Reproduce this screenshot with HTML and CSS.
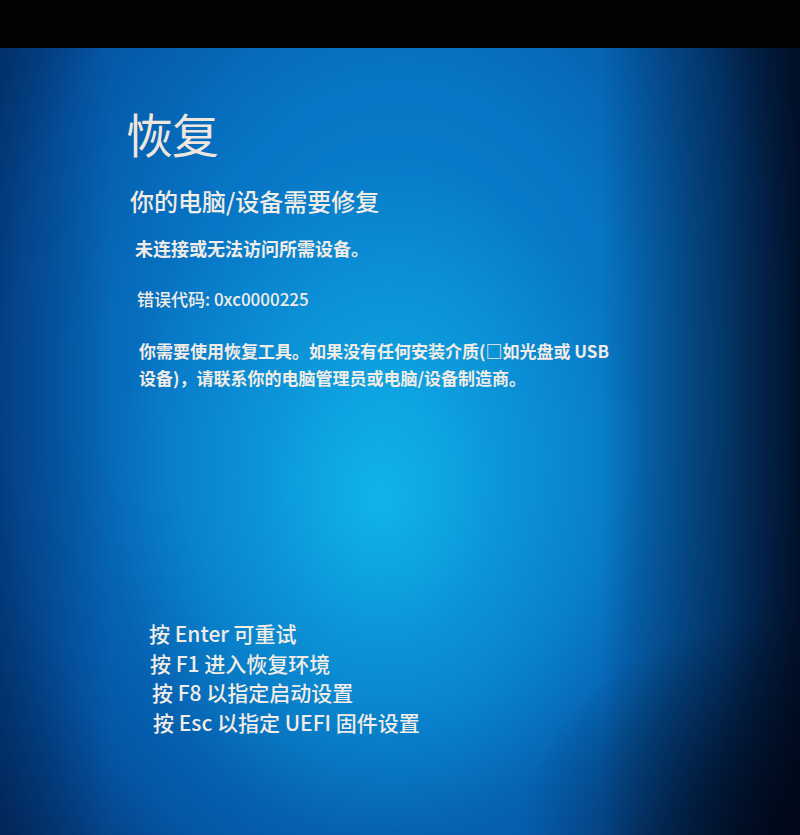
FILE: index.html
```html
<!DOCTYPE html>
<html lang="zh-CN">
<head>
<meta charset="utf-8">
<link rel="stylesheet" href="styles.css">
</head>
<body>
<div class="bezel"></div>
<main class="screen">
  <section class="message">
    <h1 class="title">恢复</h1>
    <h2 class="subtitle">你的电脑/设备需要修复</h2>
    <p class="lead">未连接或无法访问所需设备。</p>
    <p class="code">错误代码: 0xc0000225</p>
    <p class="body-text">你需要使用恢复工具。如果没有任何安装介质(□如光盘或 USB<br>设备)，请联系你的电脑管理员或电脑/设备制造商。</p>
  </section>
  <ul class="keys">
    <li class="k1">按 Enter 可重试</li>
    <li class="k2">按 F1 进入恢复环境</li>
    <li class="k3">按 F8 以指定启动设置</li>
    <li class="k4">按 Esc 以指定 UEFI 固件设置</li>
  </ul>
</main>
</body>
</html>
```

FILE: styles.css
```css
html, body {
  margin: 0;
  padding: 0;
  width: 800px;
  height: 835px;
  overflow: hidden;
  background: #000;
}
body {
  font-family: "Noto Sans CJK SC", "Noto Sans", sans-serif;
  color: #f2ece6;
}
.bezel {
  height: 48px;
  background: #020304;
}
.screen {
  height: 787px;
  box-sizing: border-box;
  display: flex;
  flex-direction: column;
  position: relative;
  background:
    radial-gradient(ellipse 270px 340px at 380px 450px, rgba(18, 192, 242, 0.8), rgba(18, 192, 242, 0.35) 45%, rgba(18, 192, 242, 0) 100%),
    radial-gradient(ellipse 520px 700px at 400px 340px, #0a8ad4 0%, #0774c4 45%, #0556a6 75%, #033470 95%, #021c40 110%);
}
.screen::after {
  content: "";
  position: absolute;
  inset: 0;
  background:
    linear-gradient(to left, rgba(0, 6, 22, 0.85) 0px, rgba(0, 6, 22, 0.45) 80px, rgba(0, 6, 22, 0) 200px),
    linear-gradient(to right, rgba(0, 25, 70, 0.35) 0px, rgba(0, 25, 70, 0) 110px),
    radial-gradient(ellipse 280px 220px at 800px 787px, rgba(0, 5, 18, 0.8), rgba(0, 5, 18, 0) 100%);
  pointer-events: none;
}
.message {
  padding: 53px 0 0 126px;
  position: relative;
  z-index: 1;
}
.title {
  margin: 0;
  font-size: 47px;
  font-weight: 400;
  line-height: 64px;
  letter-spacing: -1px;
  color: #efe6de;
}
.subtitle {
  margin: 20px 0 0 4px;
  font-size: 24px;
  font-weight: 500;
  line-height: 32px;
}
.lead {
  margin: 18px 0 0 9px;
  font-size: 18px;
  font-weight: 700;
  line-height: 26px;
}
.code {
  margin: 26px 0 0 11px;
  font-size: 17px;
  font-weight: 500;
  line-height: 24px;
}
.body-text {
  margin: 26px 0 0 13px;
  font-size: 17px;
  font-weight: 700;
  line-height: 27px;
}
.keys {
  list-style: none;
  margin: 228px 0 0 0;
  padding: 0 0 0 149px;
  position: relative;
  z-index: 1;
  font-size: 21px;
  font-weight: 500;
  line-height: 29.5px;
}
.keys li { white-space: nowrap; }
.k2 { padding-left: 1px; }
.k3 { padding-left: 3px; }
.k4 { padding-left: 4px; }
```
